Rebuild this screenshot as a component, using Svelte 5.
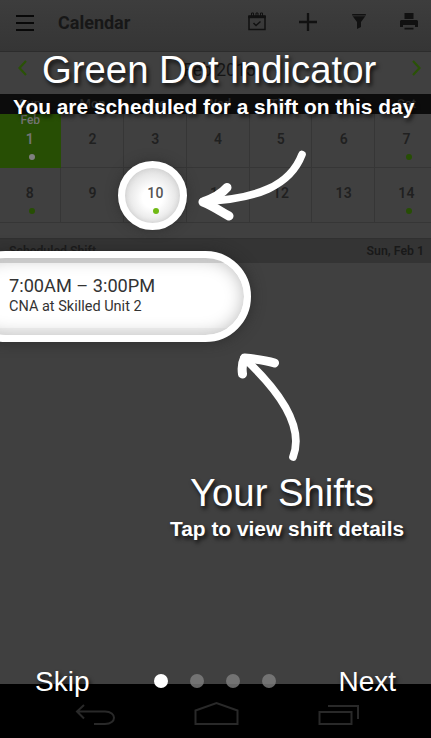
<script>
  const weekdays = ['Sun', 'Mon', 'Tue', 'Wed', 'Thu', 'Fri', 'Sat'];
  const days = [1, 2, 3, 4, 5, 6, 7, 8, 9, 10, 11, 12, 13, 14];
  const scheduled = [1, 7, 8, 14];
  const pages = [0, 1, 2, 3];
</script>

<div class="screen">
  <header>
    <svg class="menu" width="18" height="17" viewBox="0 0 18 17"><path d="M0 1h18M0 8h18M0 15h18" stroke="#080808" stroke-width="2" /></svg>
    <h1>Calendar</h1>
    <div class="tools">
      <svg width="18" height="19" viewBox="0 0 18 19" fill="none" stroke="#111"><path d="M1 4v13.500h16V4" stroke-width="1.500" /><path d="M.3 4.700h17.400" stroke-width="3" /><path d="M3.500 5V1h2v4M8 5V1h2v4M12.500 5V1h2v4" stroke-width="1" /><path d="m5.500 11 2.500 2.500 4.500-4" stroke-width="1.500" /></svg>
      <svg width="18" height="18" viewBox="0 0 18 18"><path d="M9 0v18M0 9h18" stroke="#111" stroke-width="2.300" /></svg>
      <svg width="14" height="15" viewBox="0 0 14 15" fill="#111"><path d="M.2 0h13.600v1.400H.2zM.7 2.300h12.600L9 8v5l-4 2V8z" /></svg>
      <svg width="18" height="17" viewBox="0 0 18 17" fill="#111"><path d="M4.500 0h9v6h-9zM1 7h16l1 1v6h-3v-2H3v2H0V8zM4.500 14.800h9v1.700h-9z" /></svg>
    </div>
  </header>
  <div class="month">
    <svg width="9" height="16" viewBox="0 0 9 16"><path d="M8 1 1.500 8 8 15" /></svg>
    <span>Feb 2015</span>
    <svg width="9" height="16" viewBox="0 0 9 16"><path d="m1 1 6.500 7L1 15" /></svg>
  </div>
  <div class="week">{#each weekdays as d}<span>{d}</span>{/each}</div>
  <div class="grid">
    {#each days as d}
      <div class="cell" class:today={d === 1}>
        {#if d === 1}<small>Feb</small>{/if}
        <b>{d === 10 ? '' : d}</b>
        {#if scheduled.includes(d)}<i></i>{/if}
      </div>
    {/each}
  </div>
  <div class="section"><span>Scheduled Shift</span><span>Sun, Feb 1</span></div>
  <main></main>
  <nav>
    <svg width="431" height="54" viewBox="0 0 431 54" fill="none" stroke="#292929" stroke-width="2"><path d="m84 21-7 6.500 7 7M77 27.500h28c12 0 12 12.500 0 12.500H94M195.500 40V26.500l21-7.500 21 7.500V40zM319.500 28h32v12h-32zM328 22h30v13" /></svg>
  </nav>

  <div class="ring"><b>10</b><i></i></div>
  <div class="pill"><strong>7:00AM – 3:00PM</strong><span>CNA at Skilled Unit 2</span></div>
  <svg class="arrows" width="431" height="738" viewBox="0 0 431 738"><path d="M302 154.500C290 186 257 199 203 201.500M293 457c10-26-6-59-49-99" /><path class="head" d="M227 187.500c-6 7-14 11-24 14.500 10 4 17 9 26 14M242.500 374c-1-7 0-12 2-16 10 1 20 2 30 5M205 201l10-3" /></svg>

  <div class="say title one">Green Dot Indicator</div>
  <div class="say sub two">You are scheduled for a shift on this day</div>
  <div class="say title three">Your Shifts</div>
  <div class="say sub four">Tap to view shift details</div>
  <div class="pager">
    <span class="skip">Skip</span>
    <div class="dots">{#each pages as p}<i class:on={p === 0}></i>{/each}</div>
    <span class="next">Next</span>
  </div>
</div>

<style>
  .screen { position: relative; width: 431px; height: 738px; overflow: hidden; display: flex; flex-direction: column; background: #404040; font-family: Roboto, sans-serif; color: #202020; }
  .screen * { box-sizing: border-box; }
  svg { display: block; flex: none; }
  header { height: 52px; flex: none; display: flex; align-items: flex-start; padding: 0 13px 0 16px; background: linear-gradient(#3d3d3d, #353535); border-bottom: 1px solid #2c2c2c; }
  .menu { margin-top: 15px; }
  h1 { margin: 12px 0 0 24px; font-size: 18px; line-height: 22px; font-weight: 700; color: #171717; }
  .tools { margin-left: auto; display: flex; align-items: flex-start; }
  .tools svg:nth-child(1) { margin: 12px 33px 0 0; }
  .tools svg:nth-child(2) { margin: 13px 34.5px 0 0; }
  .tools svg:nth-child(3) { margin: 14px 34.5px 0 0; }
  .tools svg:nth-child(4) { margin: 13px 0 0; }
  .month { height: 42px; flex: none; display: flex; justify-content: space-between; padding: 8px 10px 0 18px; font-size: 17.5px; line-height: 20px; color: #151515; }
  .month path { fill: none; stroke: #2a5206; stroke-width: 2.2; }
  .month span { padding-left: 0; }
  .week { height: 20px; flex: none; background: #0c0c0c; display: grid; grid-template-columns: repeat(7, 62.8px); margin-left: -1.6px; text-align: center; font-size: 13px; line-height: 20px; color: #2c2c2c; font-weight: 500; }
  .grid { flex: none; display: grid; grid-template-columns: repeat(7, 62.8px); margin-left: -1.6px; grid-template-rows: 54px 55px; }
  .cell { position: relative; text-align: center; border: solid #363636; border-width: 0 1px 1px 0; font-size: 14px; line-height: 18px; padding: 16px 0 0 1px; }
  .cell b { font-weight: 600; letter-spacing: .3px; }
  .today { background: #274e04; color: #747474; border-color: #274e04; }
  .today small { position: absolute; left: 22px; top: 0; font-size: 12px; line-height: 13px; font-weight: 500; }
  .cell i, .ring i { position: absolute; width: 6px; height: 6px; border-radius: 50%; background: #274e04; left: 30.6px; top: 40px; }
  .today i { background: #808080; }
  .section { height: 25px; flex: none; margin-top: 15px; display: flex; justify-content: space-between; padding: 0 7px 0 9px; background: #343434; border-top: 1px solid #303030; font-size: 12.3px; line-height: 24px; font-weight: 600; color: #191919; }
  main { flex: 1; background: #404040; }
  nav { height: 54px; flex: none; background: #000; }
  .ring { position: absolute; left: 118px; top: 161px; width: 69px; height: 69px; border: 7px solid #fff; border-radius: 50%; background: radial-gradient(circle at 50% 54%, #fff 25%, #dedede 72%); box-shadow: inset 0 0 5px #ccc, 0 0 12px #2228; color: #555; font-size: 14px; line-height: 18px; text-align: center; padding: 16px 0 0 6px; }
  .ring b { font-weight: 500; letter-spacing: .4px; }
  .ring i { background: #70b914; left: 28px; top: 40px; }
  .pill { position: absolute; left: -40px; top: 251px; width: 291px; height: 91px; border: 7px solid #fff; border-radius: 46px; background: linear-gradient(#d0d0d0 0 5px, #fff 5px 70px, #f4f4f4 70px); box-shadow: inset 0 0 17px #bdbdbd, 0 0 14px #222a; color: #333; padding: 17px 0 0 42px; display: flex; flex-direction: column; }
  .pill strong { font-size: 18.2px; line-height: 22px; font-weight: 400; white-space: nowrap; }
  .pill span { font-size: 14.5px; line-height: 19px; white-space: nowrap; }
  .arrows { position: absolute; left: 0; top: 0; }
  .arrows path { fill: none; stroke: #fff; stroke-width: 7.7; stroke-linecap: round; stroke-linejoin: round; }
  .arrows .head { stroke-width: 9; }
  .say, .pager { position: absolute; font-family: "Liberation Sans", Arial, sans-serif; color: #fff; text-shadow: 2px 3px 4px #000c; white-space: nowrap; }
  .title { font-size: 38.3px; line-height: 44px; }
  .sub { font-size: 20.9px; line-height: 24px; font-weight: 700; }
  .one { left: 42px; top: 48px; }
  .two { left: 13px; top: 95px; }
  .three { left: 190px; top: 471px; }
  .four { left: 170px; top: 517px; }
  .pager { left: 0; top: 665px; width: 431px; height: 34px; padding: 0 35px 0 35px; display: flex; justify-content: space-between; font-size: 28px; line-height: 34px; }
  .dots { position: absolute; left: 154px; top: 9px; display: flex; gap: 22px; }
  .dots i { width: 14px; height: 14px; border-radius: 50%; background: #808080cc; }
  .dots .on { background: #fff; }
</style>
